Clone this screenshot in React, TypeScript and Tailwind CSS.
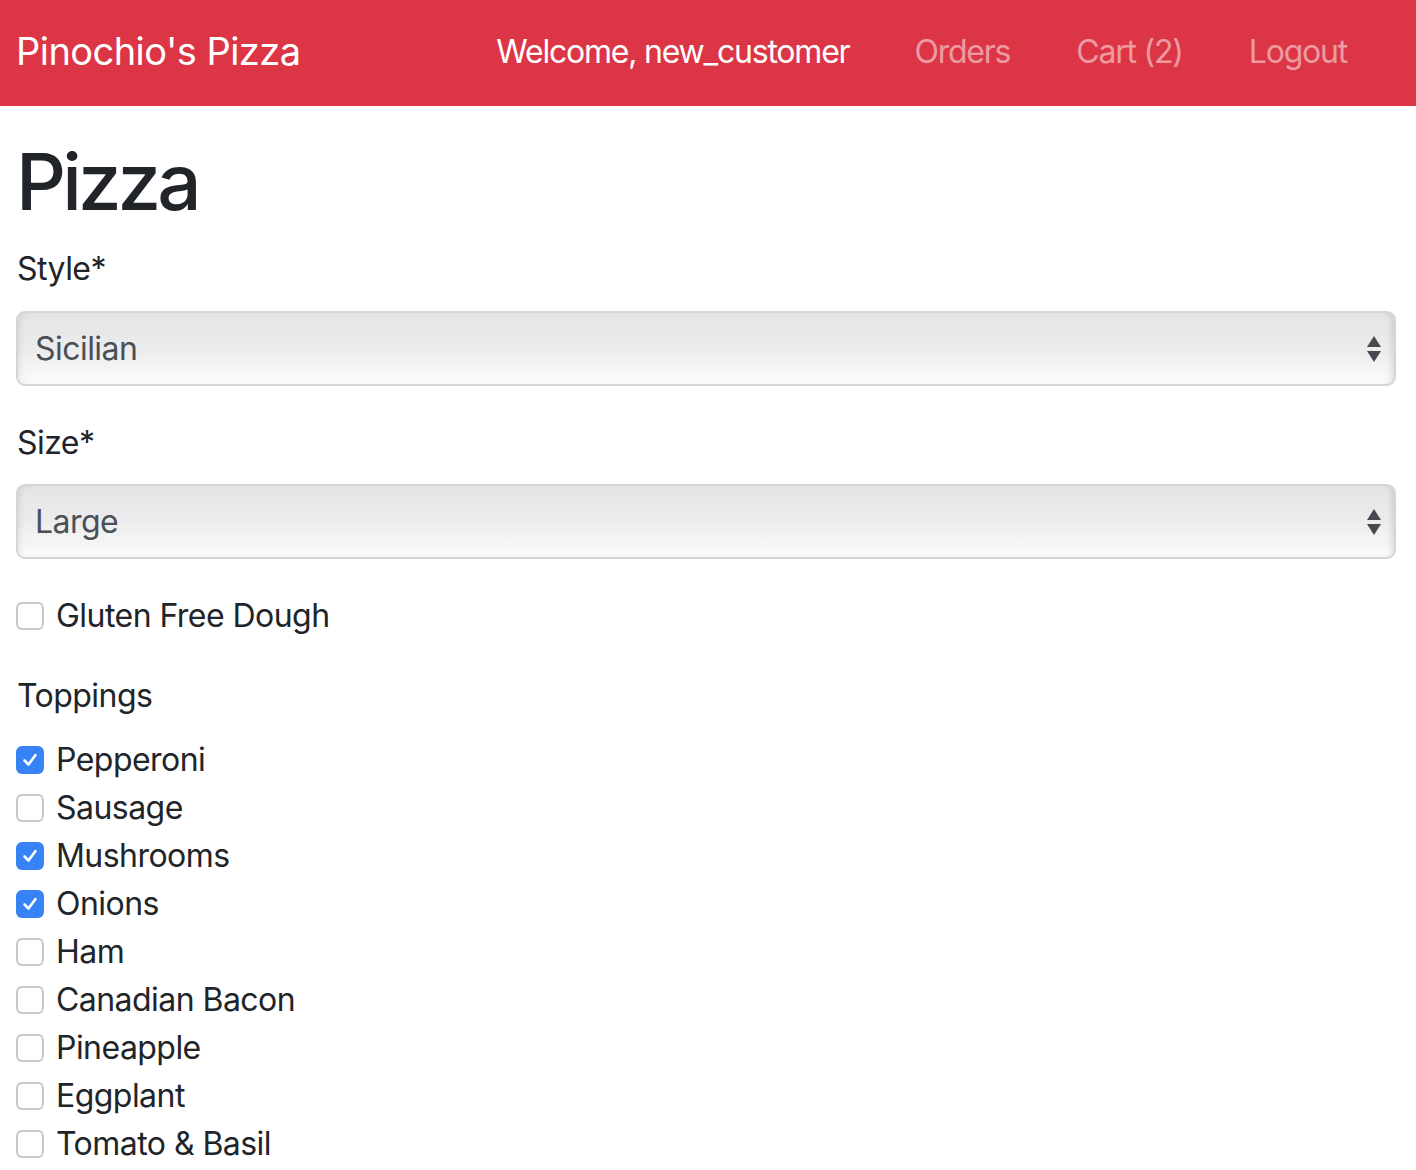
import React from "react";

const font = { fontFamily: "Inter, 'Helvetica Neue', Arial, sans-serif", letterSpacing: "-0.034em" };

function Select({ value }: { value: string }) {
  return (
    <div className="relative h-[75px] w-full rounded-[9px] border-2 border-[#d2d6da] bg-gradient-to-b from-[#e4e4e4] via-[#ececec] to-[#fbfbfb] shadow-[inset_6px_0_6px_-4px_rgba(0,0,0,0.08),inset_-6px_0_6px_-4px_rgba(0,0,0,0.12)] flex items-center">
      <span className="pl-[17px] text-[32px] text-[#495057] leading-none">{value}</span>
      <svg className="absolute right-[12px] top-1/2 -translate-y-1/2" width="16" height="28" viewBox="0 0 16 28">
        <polygon points="8,1 15,12 1,12" fill="#454a50" />
        <polygon points="1,16 15,16 8,27" fill="#454a50" />
      </svg>
    </div>
  );
}

function Check({ label, checked }: { label: string; checked?: boolean }) {
  return (
    <div className="flex items-center h-[48px]">
      {checked ? (
        <span className="w-[28px] h-[28px] shrink-0 rounded-[6px] bg-[#3683f5] flex items-center justify-center">
          <svg width="18" height="18" viewBox="0 0 18 18">
            <path d="M3.5 9.5 L7.5 13.5 L14.5 4" stroke="white" strokeWidth="2.6" fill="none" strokeLinecap="round" strokeLinejoin="round" />
          </svg>
        </span>
      ) : (
        <span className="w-[28px] h-[28px] shrink-0 rounded-[6px] border-2 border-[#c8c8c8] bg-white" />
      )}
      <span className="ml-[12px] text-[32px] text-[#212529] leading-none">{label}</span>
    </div>
  );
}

export default function App() {
  const toppings: [string, boolean][] = [
    ["Pepperoni", true],
    ["Sausage", false],
    ["Mushrooms", true],
    ["Onions", true],
    ["Ham", false],
    ["Canadian Bacon", false],
    ["Pineapple", false],
    ["Eggplant", false],
    ["Tomato & Basil", false],
  ];
  return (
    <div style={font} className="w-[1416px] min-h-[1170px] bg-white">
      <nav className="h-[106px] bg-[#dc3545] flex items-center pl-[16px] pr-[36px]">
        <span className="text-[38px] text-white leading-none -mt-[5px]">Pinochio's Pizza</span>
        <div className="ml-auto flex items-center text-[32px] leading-none -mt-[3px] tracking-[-0.038em]">
          <span className="text-white px-[32px]">Welcome, new_customer</span>
          <span className="text-white/50 px-[33px]">Orders</span>
          <span className="text-white/50 px-[33px]">Cart (2)</span>
          <span className="text-white/50 px-[33px]">Logout</span>
        </div>
      </nav>
      <main className="pl-[16px] pr-[20px]">
        <h1 className="text-[78px] font-medium text-[#212529] leading-none pt-[37px] pb-[24px] tracking-[-0.05em]">Pizza</h1>
        <div className="text-[32px] text-[#212529] leading-[48px] pl-[1px]">Style*</div>
        <div className="mt-[18px]">
          <Select value="Sicilian" />
        </div>
        <div className="mt-[33px] text-[32px] text-[#212529] leading-[48px] pl-[1px]">Size*</div>
        <div className="mt-[17px]">
          <Select value="Large" />
        </div>
        <div className="mt-[33px]">
          <Check label="Gluten Free Dough" />
        </div>
        <div className="mt-[32px] text-[32px] text-[#212529] leading-[48px] pl-[1px]">Toppings</div>
        <div className="mt-[16px]">
          {toppings.map(([t, c]) => (
            <Check key={t} label={t} checked={c} />
          ))}
        </div>
      </main>
    </div>
  );
}
